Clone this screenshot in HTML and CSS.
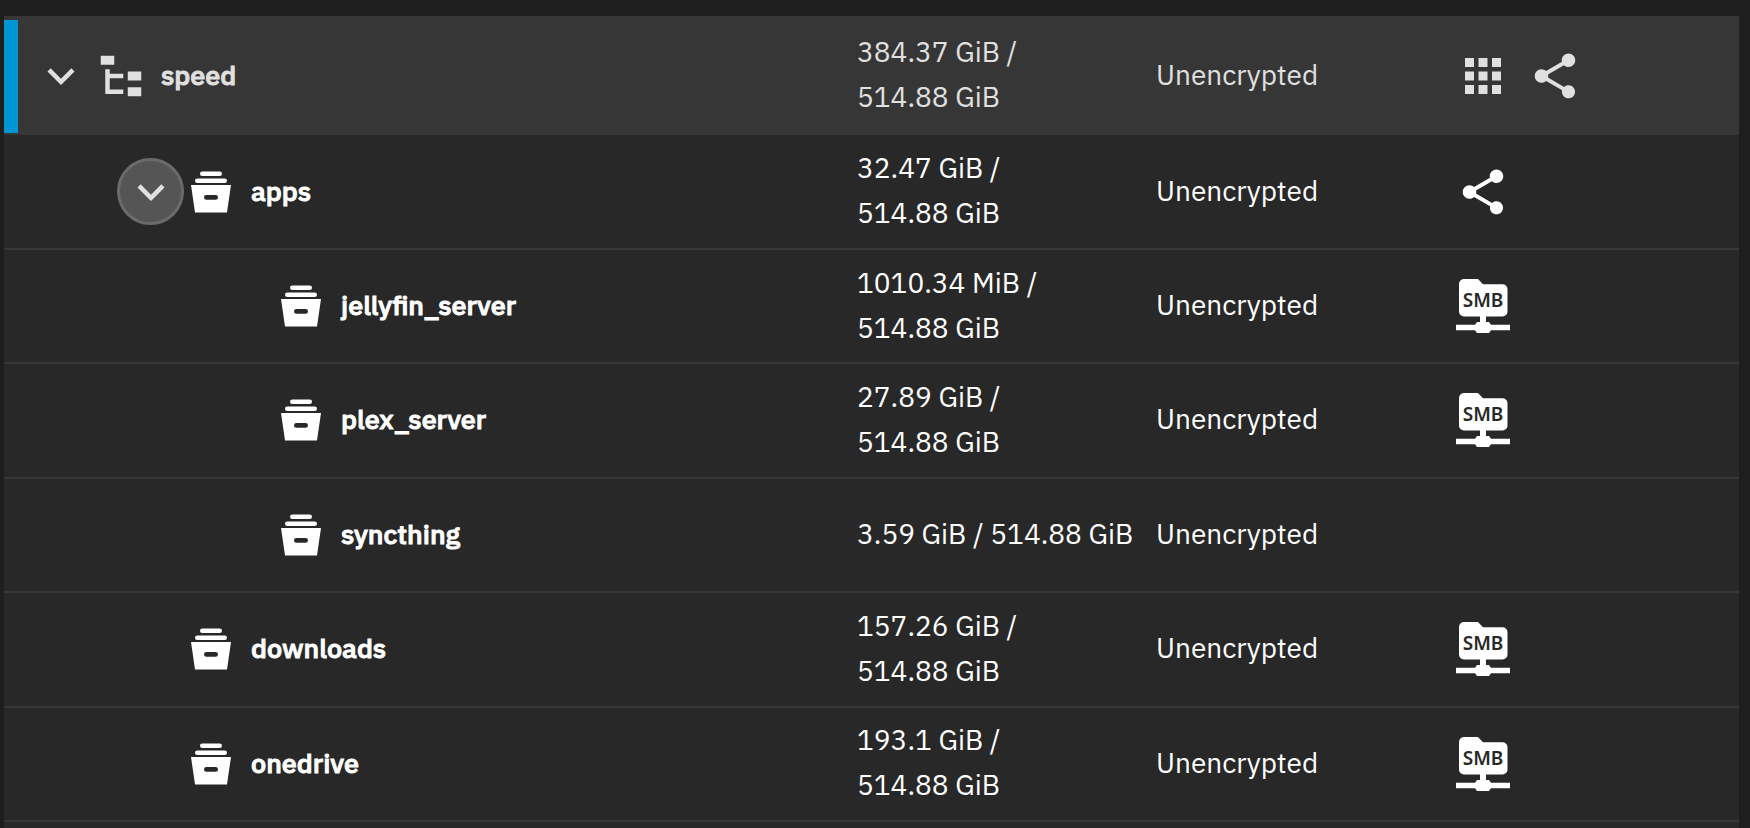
FILE: index.html
```
<!DOCTYPE html>
<html lang="en">
<head>
    <meta charset="UTF-8">
    <meta name="viewport" content="width=device-width, initial-scale=1.0">
    <title>Datasets</title>
    <link rel="stylesheet" href="styles.css">
</head>
<body>
    <!-- Icon definitions -->
    <svg class="sprite" aria-hidden="true">
        <symbol id="chevron" viewBox="0 0 24 24">
            <path d="M7.41 8.59 12 13.17l4.59-4.58L18 10l-6 6-6-6z"/>
        </symbol>
        <symbol id="tree" viewBox="0 0 24 24">
            <path d="M3 3h6v4H3zM15 10h6v4h-6zM15 17h6v4h-6zM13 13H7v5h6v2H5V9h2v2h6z"/>
        </symbol>
        <symbol id="dataset" viewBox="0 0 54 54">
            <rect x="16" y="6.5" width="22" height="4.6" rx="2.3"/>
            <rect x="11" y="13.4" width="32" height="4.6" rx="2.3"/>
            <path fill-rule="evenodd" d="M7 20h40l-4 27.5H11zM22.4 30a2.4 2.4 0 0 0 0 4.8h9.2a2.4 2.4 0 0 0 0-4.8z"/>
        </symbol>
        <symbol id="apps" viewBox="0 0 24 24">
            <path d="M4 8h4V4H4zm6 12h4v-4h-4zm-6 0h4v-4H4zm0-6h4v-4H4zm6 0h4v-4h-4zm6-10v4h4V4zm-6 4h4V4h-4zm6 6h4v-4h-4zm0 6h4v-4h-4z"/>
        </symbol>
        <symbol id="share" viewBox="0 0 24 24">
            <path d="M18 16.08c-.76 0-1.44.3-1.96.77L8.91 12.7c.05-.23.09-.46.09-.7s-.04-.47-.09-.7l7.05-4.11c.54.5 1.25.81 2.04.81 1.66 0 3-1.34 3-3s-1.34-3-3-3-3 1.34-3 3c0 .24.04.47.09.7L8.04 9.81C7.5 9.31 6.79 9 6 9c-1.66 0-3 1.34-3 3s1.34 3 3 3c.79 0 1.5-.31 2.04-.81l7.12 4.16c-.05.21-.08.43-.08.65 0 1.61 1.31 2.92 2.92 2.92s2.92-1.31 2.92-2.92-1.31-2.92-2.92-2.92z"/>
        </symbol>
        <symbol id="network-folder" viewBox="0 0 54 54">
            <path d="M8 0h14l5 5.3h19.500a5 5 0 0 1 5 5v22.200a5 5 0 0 1-5 5H30V43h3l2 2.700h19v5.600H35L33 54H21l-2-2.700H0v-5.600h19l2-2.700h3v-5.500H8a5 5 0 0 1-5-5V5a5 5 0 0 1 5-5z"/>
        </symbol>
    </svg>

    <table class="datasets">
        <colgroup>
            <col>
            <col class="col-size">
            <col class="col-encryption">
            <col class="col-roles">
        </colgroup>
        <tbody>
            <tr class="selected">
                <td>
                    <div class="name level-0">
                        <button class="toggle" type="button" aria-label="Collapse speed"><svg class="icon"><use href="#chevron"/></svg></button>
                        <svg class="icon"><use href="#tree"/></svg>
                        <span class="label">speed</span>
                    </div>
                </td>
                <td class="size">384.37 GiB / 514.88&nbsp;GiB</td>
                <td class="encryption">Unencrypted</td>
                <td>
                    <div class="roles">
                        <svg class="icon"><use href="#apps"/></svg>
                        <svg class="icon"><use href="#share"/></svg>
                    </div>
                </td>
            </tr>
            <tr>
                <td>
                    <div class="name level-1">
                        <button class="toggle focused" type="button" aria-label="Collapse apps"><svg class="icon"><use href="#chevron"/></svg></button>
                        <svg class="icon"><use href="#dataset"/></svg>
                        <span class="label">apps</span>
                    </div>
                </td>
                <td class="size">32.47 GiB / 514.88&nbsp;GiB</td>
                <td class="encryption">Unencrypted</td>
                <td>
                    <div class="roles">
                        <svg class="icon"><use href="#share"/></svg>
                    </div>
                </td>
            </tr>
            <tr>
                <td>
                    <div class="name level-2">
                        <svg class="icon"><use href="#dataset"/></svg>
                        <span class="label">jellyfin_server</span>
                    </div>
                </td>
                <td class="size">1010.34 MiB / 514.88&nbsp;GiB</td>
                <td class="encryption">Unencrypted</td>
                <td>
                    <div class="roles">
                        <svg class="icon" viewBox="0 0 54 54"><use href="#network-folder"/><text class="smb-text" x="27" y="28">SMB</text></svg>
                    </div>
                </td>
            </tr>
            <tr>
                <td>
                    <div class="name level-2">
                        <svg class="icon"><use href="#dataset"/></svg>
                        <span class="label">plex_server</span>
                    </div>
                </td>
                <td class="size">27.89 GiB / 514.88&nbsp;GiB</td>
                <td class="encryption">Unencrypted</td>
                <td>
                    <div class="roles">
                        <svg class="icon" viewBox="0 0 54 54"><use href="#network-folder"/><text class="smb-text" x="27" y="28">SMB</text></svg>
                    </div>
                </td>
            </tr>
            <tr>
                <td>
                    <div class="name level-2">
                        <svg class="icon"><use href="#dataset"/></svg>
                        <span class="label">syncthing</span>
                    </div>
                </td>
                <td class="size">3.59 GiB / 514.88&nbsp;GiB</td>
                <td class="encryption">Unencrypted</td>
                <td></td>
            </tr>
            <tr>
                <td>
                    <div class="name level-1 leaf">
                        <svg class="icon"><use href="#dataset"/></svg>
                        <span class="label">downloads</span>
                    </div>
                </td>
                <td class="size">157.26 GiB / 514.88&nbsp;GiB</td>
                <td class="encryption">Unencrypted</td>
                <td>
                    <div class="roles">
                        <svg class="icon" viewBox="0 0 54 54"><use href="#network-folder"/><text class="smb-text" x="27" y="28">SMB</text></svg>
                    </div>
                </td>
            </tr>
            <tr>
                <td>
                    <div class="name level-1 leaf">
                        <svg class="icon"><use href="#dataset"/></svg>
                        <span class="label">onedrive</span>
                    </div>
                </td>
                <td class="size">193.1 GiB / 514.88&nbsp;GiB</td>
                <td class="encryption">Unencrypted</td>
                <td>
                    <div class="roles">
                        <svg class="icon" viewBox="0 0 54 54"><use href="#network-folder"/><text class="smb-text" x="27" y="28">SMB</text></svg>
                    </div>
                </td>
            </tr>
        </tbody>
    </table>
</body>
</html>
```

FILE: styles.css
```
* {
    box-sizing: border-box;
}
body {
    margin: 0;
    padding: 16px 11px 0 4px;
    min-height: 100vh;
    background: linear-gradient(#282828, #282828) 4px 16px / calc(100% - 15px) 100% no-repeat #1e1e1e;
    color: #fff;
    font-family: "IBM Plex Sans", Roboto, sans-serif;
    font-size: 28px;
    line-height: 45px;
}
.sprite {
    position: absolute;
    width: 0;
    height: 0;
}
.datasets {
    width: 100%;
    height: calc(100vh - 22px);
    table-layout: fixed;
    border-collapse: separate;
    border-spacing: 0;
    background: #282828;
}
.col-size {
    width: 299px;
}
.col-encryption {
    width: 300px;
}
.col-roles {
    width: 283px;
}
tr {
    height: 114px;
}
td {
    padding: 0;
    border-bottom: 2px solid #383838;
    vertical-align: middle;
}
.size,
.encryption {
    padding-bottom: 3px;
}
.size {
    padding-right: 22px;
}

/* Root dataset, currently selected */
.selected {
    height: 119px;
    color: #e0e0e0;
}
.selected td {
    padding-top: 2px;
    background-color: #363636;
    border-bottom-color: #363636;
}
.selected td:first-child {
    background-image: linear-gradient(#0095d5, #0095d5);
    background-position: 0 4px;
    background-size: 14px calc(100% - 4px);
    background-repeat: no-repeat;
}

.name {
    display: flex;
    align-items: center;
}
.level-0 {
    padding-left: 23px;
}
.level-1 {
    padding-left: 113px;
}
.level-1.leaf {
    padding-left: 180px;
}
.level-2 {
    padding-left: 270px;
}
.label {
    margin-left: 13px;
    padding-bottom: 3px;
    font-size: 27px;
    font-weight: 500;
    -webkit-text-stroke: 1px currentColor;
}
.icon {
    display: block;
    flex: none;
    width: 54px;
    height: 54px;
    fill: currentColor;
}
.smb-text {
    fill: #282828;
    font-family: "Noto Sans", sans-serif;
    font-size: 19px;
    font-weight: 600;
    text-anchor: middle;
}
.toggle {
    display: flex;
    align-items: center;
    justify-content: center;
    width: 67px;
    height: 67px;
    padding: 0;
    border: 3px solid transparent;
    border-radius: 50%;
    background: none;
    color: #e0e0e0;
    cursor: pointer;
}
.toggle.focused {
    background: #555;
    border-color: #6a6a6a;
}
.roles {
    display: flex;
    gap: 18px;
}
```
